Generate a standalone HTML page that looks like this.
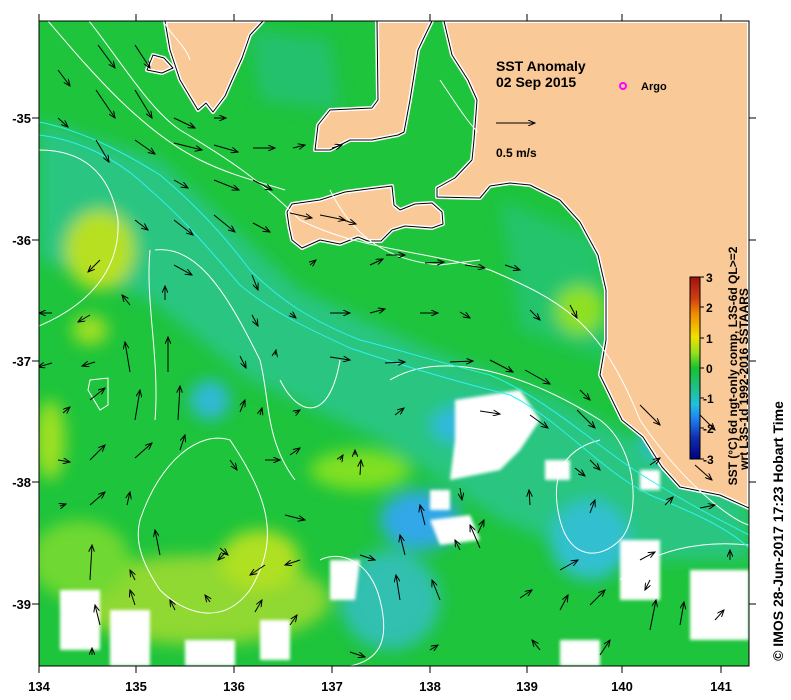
<!DOCTYPE html>
<html><head><meta charset="utf-8"><style>
html,body{margin:0;padding:0;background:#fff;width:791px;height:700px;overflow:hidden}
svg{display:block}
text{font-family:"Liberation Sans",sans-serif;font-weight:bold;fill:#000}
</style></head><body>
<svg width="791" height="700" viewBox="0 0 791 700" xmlns="http://www.w3.org/2000/svg">
<defs>
<clipPath id="pc"><rect x="39" y="21" width="710" height="645"/></clipPath>
<filter id="b8" x="-50%" y="-50%" width="200%" height="200%"><feGaussianBlur stdDeviation="8"/></filter>
<filter id="b4" x="-50%" y="-50%" width="200%" height="200%"><feGaussianBlur stdDeviation="1.5"/></filter>
<marker id="ah" markerWidth="8" markerHeight="6" refX="7" refY="3" orient="auto" markerUnits="userSpaceOnUse"><path d="M0,0 L7,3 L0,6" fill="none" stroke="#000" stroke-width="1"/></marker>
<linearGradient id="cb" x1="0" y1="0" x2="0" y2="1">
<stop offset="0" stop-color="#a01010"/><stop offset="0.12" stop-color="#d04010"/><stop offset="0.2" stop-color="#f08a00"/><stop offset="0.33" stop-color="#f0e000"/><stop offset="0.42" stop-color="#90e020"/><stop offset="0.5" stop-color="#18c030"/><stop offset="0.62" stop-color="#20c090"/><stop offset="0.7" stop-color="#20c0e0"/><stop offset="0.78" stop-color="#2080f0"/><stop offset="0.88" stop-color="#1030b0"/><stop offset="1" stop-color="#000080"/>
</linearGradient>
</defs>
<g clip-path="url(#pc)">
<rect x="39" y="21" width="710" height="645" fill="#1ec43c"/>
<g filter="url(#b8)">
<path d="M39,120 L160,160 L300,290 L430,350 L560,400 L749,500 L749,560 L600,560 L500,520 L380,440 L250,380 L150,300 L39,260 Z" fill="#2cc592" opacity="0.8"/>
<path d="M250,30 L330,40 L340,110 L260,100 Z" fill="#2ac090" opacity="0.6"/>
<path d="M500,200 L600,240 L610,360 L520,330 Z" fill="#2ac48c" opacity="0.6"/>
<ellipse cx="420" cy="520" rx="40" ry="30" fill="#30a8e8"/>
<ellipse cx="210" cy="400" rx="20" ry="20" fill="#30b8d8"/>
<ellipse cx="470" cy="425" rx="40" ry="20" fill="#30b8e0"/>
<ellipse cx="590" cy="540" rx="40" ry="40" fill="#30c0d0"/>
<ellipse cx="390" cy="600" rx="50" ry="50" fill="#30c0b0"/>
<ellipse cx="690" cy="440" rx="50" ry="25" fill="#30b8d8"/>
<ellipse cx="100" cy="250" rx="35" ry="40" fill="#b8e020"/>
<ellipse cx="90" cy="330" rx="18" ry="15" fill="#a0e020"/>
<ellipse cx="50" cy="440" rx="15" ry="40" fill="#a0e020"/>
<ellipse cx="200" cy="600" rx="130" ry="45" fill="#90d830"/>
<ellipse cx="260" cy="560" rx="40" ry="30" fill="#b0e020"/>
<ellipse cx="80" cy="560" rx="50" ry="40" fill="#70d830"/>
<ellipse cx="580" cy="310" rx="25" ry="25" fill="#90e020"/>
<ellipse cx="720" cy="340" rx="20" ry="30" fill="#a0e020"/>
<ellipse cx="360" cy="470" rx="50" ry="20" fill="#80e020"/>
</g>
<g fill="#fff" filter="url(#b4)">
<path d="M455,400 L520,390 L540,420 L520,450 L500,470 L450,480 L455,440 Z"/>
<path d="M430,520 L470,515 L480,540 L440,545 Z"/>
<path d="M330,560 L360,560 L355,600 L330,600 Z"/>
<rect x="60" y="590" width="40" height="60"/>
<rect x="110" y="610" width="40" height="56"/>
<rect x="185" y="640" width="50" height="26"/>
<rect x="260" y="620" width="30" height="40"/>
<rect x="620" y="540" width="40" height="60"/>
<rect x="690" y="570" width="59" height="70"/>
<rect x="560" y="640" width="40" height="26"/>
<rect x="640" y="470" width="20" height="20"/>
<rect x="430" y="490" width="20" height="20"/>
<rect x="545" y="460" width="25" height="20"/>
</g>
<g fill="#f9c998" stroke="#fff" stroke-width="4" stroke-linejoin="round">
<path d="M165,21 L170,50 L180,80 L192,100 L198,110 L206,103 L213,112 L225,96 L232,80 L242,58 L250,35 L263,21 Z"/>
<path d="M147,70 L153,55 L164,58 L173,68 L162,73 Z"/>
<path d="M377,21 L378,100 L372,108 L330,110 L318,125 L315,150 L330,150 L350,140 L372,140 L398,135 L404,132 L410,100 L418,50 L432,21 Z"/>
<path d="M444,21 L452,55 L468,80 L477,100 L474,140 L472,160 L455,178 L437,188 L437,197 L480,198 L490,186 L510,183 L530,185 L560,200 L580,222 L598,255 L606,290 L606,340 L600,375 L622,420 L643,437 L662,467 L680,487 L720,495 L749,508 L749,21 Z"/>
<path d="M287,212 L292,204 L320,200 L345,192 L376,188 L392,186 L394,205 L400,210 L415,204 L432,203 L442,212 L443,224 L432,228 L405,226 L392,230 L381,241 L368,241 L358,237 L340,244 L320,240 L302,248 L292,240 L289,226 Z"/>
</g>
<g fill="none" stroke="#000" stroke-width="1" stroke-linejoin="round">
<path d="M165,21 L170,50 L180,80 L192,100 L198,110 L206,103 L213,112 L225,96 L232,80 L242,58 L250,35 L263,21"/>
<path d="M147,70 L153,55 L164,58 L173,68 L162,73 Z"/>
<path d="M377,21 L378,100 L372,108 L330,110 L318,125 L315,150 L330,150 L350,140 L372,140 L398,135 L404,132 L410,100 L418,50 L432,21"/>
<path d="M444,21 L452,55 L468,80 L477,100 L474,140 L472,160 L455,178 L437,188 L437,197 L480,198 L490,186 L510,183 L530,185 L560,200 L580,222 L598,255 L606,290 L606,340 L600,375 L622,420 L643,437 L662,467 L680,487 L720,495 L749,508"/>
<path d="M287,212 L292,204 L320,200 L345,192 L376,188 L392,186 L394,205 L400,210 L415,204 L432,203 L442,212 L443,224 L432,228 L405,226 L392,230 L381,241 L368,241 L358,237 L340,244 L320,240 L302,248 L292,240 L289,226 Z"/>
</g>
<g fill="none" stroke="#fff" stroke-width="1">
<path d="M48,21 C90,70 140,130 200,160 C230,175 260,182 285,190"/>
<path d="M89,21 C120,60 150,110 180,130 C230,160 260,180 300,220 C360,250 420,250 490,270 C560,300 600,320 640,420 C680,480 730,520 749,525"/>
<path d="M39,150 C80,150 110,170 118,220 C120,260 100,300 39,326"/>
<path d="M163,21 C175,40 185,45 190,60"/>
<path d="M330,190 C350,230 380,260 440,265 L480,260"/>
<path d="M155,250 C200,245 230,300 260,360 C270,400 265,440 295,480"/>
<path d="M150,250 C145,300 160,360 155,420"/>
<path d="M90,380 L108,378 L108,405 L100,410 L88,390 Z"/>
<path d="M280,380 C300,420 330,420 340,360"/>
<path d="M140,520 C160,460 200,430 230,440 C270,500 280,540 250,590 C220,630 180,610 160,590 C140,560 135,540 140,520"/>
<path d="M320,560 C340,550 370,560 380,600 C390,640 380,660 350,666"/>
<path d="M390,380 C440,350 520,370 600,420 C640,450 640,520 620,540 C600,560 570,560 560,520 C550,480 560,450 600,440"/>
<path d="M620,580 C650,550 700,540 749,545"/>
<path d="M440,80 C460,110 470,125 478,132"/>
</g>
<g fill="none" stroke="#30f0f0" stroke-width="1">
<path d="M39,122 C80,130 120,150 160,175 C190,200 220,230 250,270 C280,300 310,320 360,340 C400,350 430,360 490,375 C550,400 600,450 650,480 C690,505 720,520 749,535"/>
<path d="M39,135 C80,140 120,160 150,190 C180,215 210,250 240,285 C270,310 300,325 350,348 C400,365 450,380 510,395 C560,420 600,470 650,495 C700,515 730,530 749,548"/>
</g>
<g stroke="#000" stroke-width="1" marker-end="url(#ah)">
<line x1="98" y1="45" x2="115" y2="68"/><line x1="135" y1="45" x2="150" y2="68"/><line x1="58" y1="70" x2="70" y2="86"/>
<line x1="96" y1="90" x2="115" y2="118"/><line x1="135" y1="90" x2="152" y2="118"/><line x1="58" y1="118" x2="68" y2="127"/>
<line x1="174" y1="118" x2="195" y2="128"/><line x1="214" y1="118" x2="226" y2="118"/>
<line x1="96" y1="140" x2="109" y2="162"/><line x1="135" y1="140" x2="155" y2="154"/><line x1="174" y1="143" x2="202" y2="150"/>
<line x1="214" y1="145" x2="238" y2="152"/><line x1="253" y1="148" x2="275" y2="148"/><line x1="293" y1="148" x2="305" y2="145"/><line x1="332" y1="148" x2="342" y2="145"/>
<line x1="174" y1="180" x2="188" y2="188"/><line x1="214" y1="180" x2="239" y2="190"/><line x1="253" y1="180" x2="272" y2="190"/>
<line x1="290" y1="213" x2="312" y2="218"/><line x1="320" y1="215" x2="345" y2="220"/><line x1="340" y1="219" x2="356" y2="224"/>
<line x1="135" y1="220" x2="148" y2="230"/><line x1="174" y1="220" x2="193" y2="235"/><line x1="214" y1="215" x2="235" y2="232"/>
<line x1="253" y1="223" x2="270" y2="232"/><line x1="386" y1="255" x2="405" y2="255"/><line x1="425" y1="263" x2="444" y2="262"/>
<line x1="465" y1="265" x2="485" y2="268"/><line x1="505" y1="265" x2="520" y2="270"/>
<line x1="100" y1="260" x2="88" y2="272"/><line x1="174" y1="265" x2="192" y2="275"/><line x1="252" y1="275" x2="258" y2="290"/>
<line x1="310" y1="265" x2="316" y2="260"/><line x1="370" y1="265" x2="383" y2="259"/>
<line x1="52" y1="313" x2="39" y2="313"/><line x1="90" y1="315" x2="78" y2="322"/><line x1="130" y1="305" x2="122" y2="295"/><line x1="165" y1="300" x2="165" y2="286"/>
<line x1="252" y1="315" x2="258" y2="326"/><line x1="290" y1="313" x2="296" y2="318"/><line x1="330" y1="313" x2="350" y2="313"/><line x1="370" y1="313" x2="385" y2="309"/>
<line x1="420" y1="313" x2="438" y2="313"/><line x1="460" y1="312" x2="470" y2="318"/><line x1="530" y1="310" x2="540" y2="320"/><line x1="570" y1="305" x2="577" y2="318"/>
<line x1="52" y1="363" x2="38" y2="367"/><line x1="95" y1="362" x2="82" y2="366"/><line x1="130" y1="372" x2="125" y2="342"/><line x1="168" y1="372" x2="168" y2="337"/>
<line x1="240" y1="356" x2="246" y2="368"/><line x1="275" y1="355" x2="276" y2="350"/><line x1="330" y1="357" x2="350" y2="360"/><line x1="385" y1="363" x2="405" y2="362"/>
<line x1="450" y1="362" x2="473" y2="361"/><line x1="490" y1="360" x2="513" y2="372"/><line x1="525" y1="370" x2="550" y2="384"/><line x1="580" y1="390" x2="590" y2="400"/>
<line x1="63" y1="413" x2="70" y2="407"/><line x1="90" y1="400" x2="105" y2="388"/><line x1="135" y1="420" x2="140" y2="390"/><line x1="178" y1="420" x2="180" y2="386"/>
<line x1="240" y1="412" x2="245" y2="400"/><line x1="260" y1="415" x2="262" y2="408"/><line x1="295" y1="413" x2="300" y2="410"/><line x1="395" y1="415" x2="404" y2="408"/>
<line x1="480" y1="411" x2="500" y2="414"/><line x1="530" y1="415" x2="548" y2="428"/><line x1="577" y1="410" x2="595" y2="428"/><line x1="640" y1="405" x2="660" y2="425"/><line x1="700" y1="415" x2="715" y2="430"/>
<line x1="58" y1="460" x2="70" y2="462"/><line x1="90" y1="460" x2="105" y2="445"/><line x1="135" y1="458" x2="152" y2="443"/><line x1="180" y1="450" x2="185" y2="435"/>
<line x1="230" y1="460" x2="237" y2="470"/><line x1="265" y1="460" x2="280" y2="460"/><line x1="290" y1="455" x2="300" y2="448"/><line x1="355" y1="455" x2="355" y2="450"/>
<line x1="460" y1="488" x2="462" y2="500"/><line x1="575" y1="468" x2="585" y2="476"/><line x1="590" y1="460" x2="600" y2="470"/><line x1="650" y1="465" x2="660" y2="458"/><line x1="695" y1="465" x2="712" y2="480"/>
<line x1="60" y1="506" x2="66" y2="504"/><line x1="90" y1="505" x2="105" y2="492"/><line x1="127" y1="505" x2="130" y2="492"/><line x1="160" y1="555" x2="155" y2="530"/>
<line x1="285" y1="515" x2="305" y2="520"/><line x1="340" y1="460" x2="343" y2="455"/><line x1="360" y1="475" x2="361" y2="460"/><line x1="425" y1="525" x2="420" y2="505"/>
<line x1="478" y1="533" x2="484" y2="520"/><line x1="530" y1="505" x2="529" y2="490"/><line x1="590" y1="513" x2="595" y2="500"/><line x1="665" y1="505" x2="673" y2="497"/><line x1="700" y1="508" x2="715" y2="505"/>
<line x1="90" y1="580" x2="92" y2="545"/><line x1="135" y1="580" x2="130" y2="570"/><line x1="220" y1="548" x2="228" y2="555"/><line x1="225" y1="553" x2="218" y2="560"/>
<line x1="265" y1="565" x2="250" y2="575"/><line x1="300" y1="560" x2="285" y2="565"/><line x1="360" y1="555" x2="375" y2="560"/><line x1="405" y1="555" x2="400" y2="535"/>
<line x1="460" y1="550" x2="455" y2="540"/><line x1="480" y1="548" x2="470" y2="525"/><line x1="560" y1="570" x2="578" y2="560"/><line x1="640" y1="560" x2="655" y2="552"/><line x1="730" y1="560" x2="730" y2="550"/>
<line x1="100" y1="625" x2="95" y2="605"/><line x1="135" y1="605" x2="130" y2="590"/><line x1="175" y1="610" x2="170" y2="600"/><line x1="210" y1="602" x2="205" y2="595"/>
<line x1="255" y1="612" x2="262" y2="600"/><line x1="290" y1="625" x2="297" y2="615"/><line x1="400" y1="600" x2="396" y2="575"/><line x1="440" y1="600" x2="432" y2="580"/>
<line x1="520" y1="598" x2="532" y2="590"/><line x1="560" y1="610" x2="568" y2="595"/><line x1="590" y1="605" x2="605" y2="590"/><line x1="650" y1="580" x2="645" y2="590"/>
<line x1="650" y1="630" x2="656" y2="600"/><line x1="680" y1="625" x2="684" y2="602"/><line x1="715" y1="620" x2="724" y2="610"/>
<line x1="350" y1="652" x2="365" y2="657"/><line x1="430" y1="650" x2="438" y2="645"/><line x1="540" y1="650" x2="532" y2="640"/><line x1="600" y1="655" x2="610" y2="640"/><line x1="92" y1="655" x2="92" y2="648"/>
</g>
</g>
<rect x="39" y="21" width="710" height="645" fill="none" stroke="#000" stroke-width="1"/>
<g stroke="#000" stroke-width="1">
<line x1="39" y1="14" x2="39" y2="21"/><line x1="136" y1="14" x2="136" y2="21"/><line x1="234" y1="14" x2="234" y2="21"/><line x1="332" y1="14" x2="332" y2="21"/><line x1="430" y1="14" x2="430" y2="21"/><line x1="527" y1="14" x2="527" y2="21"/><line x1="622" y1="14" x2="622" y2="21"/><line x1="721" y1="14" x2="721" y2="21"/>
<line x1="39" y1="666" x2="39" y2="673"/><line x1="136" y1="666" x2="136" y2="673"/><line x1="234" y1="666" x2="234" y2="673"/><line x1="332" y1="666" x2="332" y2="673"/><line x1="430" y1="666" x2="430" y2="673"/><line x1="527" y1="666" x2="527" y2="673"/><line x1="622" y1="666" x2="622" y2="673"/><line x1="721" y1="666" x2="721" y2="673"/>
<line x1="32" y1="118" x2="39" y2="118"/><line x1="32" y1="240" x2="39" y2="240"/><line x1="32" y1="361" x2="39" y2="361"/><line x1="32" y1="482" x2="39" y2="482"/><line x1="32" y1="604" x2="39" y2="604"/>
<line x1="749" y1="118" x2="756" y2="118"/><line x1="749" y1="240" x2="756" y2="240"/><line x1="749" y1="361" x2="756" y2="361"/><line x1="749" y1="482" x2="756" y2="482"/><line x1="749" y1="604" x2="756" y2="604"/>
</g>
<g font-size="13" text-anchor="end">
<text x="31" y="123">-35</text><text x="31" y="245">-36</text><text x="31" y="366">-37</text><text x="31" y="487">-38</text><text x="31" y="609">-39</text>
</g>
<g font-size="13" text-anchor="middle">
<text x="39" y="691">134</text><text x="136" y="691">135</text><text x="234" y="691">136</text><text x="332" y="691">137</text><text x="430" y="691">138</text><text x="527" y="691">139</text><text x="622" y="691">140</text><text x="721" y="691">141</text>
</g>
<text x="496" y="71" font-size="14">SST Anomaly</text>
<text x="496" y="87" font-size="14">02 Sep 2015</text>
<line x1="496" y1="123" x2="535" y2="123" stroke="#000" stroke-width="1" marker-end="url(#ah)"/>
<text x="496" y="157" font-size="12">0.5 m/s</text>
<circle cx="623" cy="86" r="3" fill="none" stroke="#ff00ff" stroke-width="2"/>
<text x="641" y="90" font-size="11">Argo</text>
<rect x="690" y="277" width="10" height="182" fill="url(#cb)" stroke="#000" stroke-width="1"/>
<g stroke="#000"><line x1="700" y1="277" x2="704" y2="277"/><line x1="700" y1="307" x2="704" y2="307"/><line x1="700" y1="338" x2="704" y2="338"/><line x1="700" y1="368" x2="704" y2="368"/><line x1="700" y1="398" x2="704" y2="398"/><line x1="700" y1="428" x2="704" y2="428"/><line x1="700" y1="459" x2="704" y2="459"/></g>
<g font-size="12"><text x="706" y="282">3</text><text x="706" y="312">2</text><text x="706" y="343">1</text><text x="706" y="373">0</text><text x="703" y="403">-1</text><text x="703" y="433">-2</text><text x="703" y="464">-3</text></g>
<text transform="translate(737,366) rotate(-90)" text-anchor="middle" font-size="12">SST (°C) 6d ngt-only comp, L3S-6d QL&gt;=2</text>
<text transform="translate(748,379) rotate(-90)" text-anchor="middle" font-size="12">wrt L3S-1d 1992-2016 SSTAARS</text>
<text transform="translate(783,531) rotate(-90)" text-anchor="middle" font-size="14">©  IMOS 28-Jun-2017 17:23 Hobart Time</text>
</svg>
</body></html>
